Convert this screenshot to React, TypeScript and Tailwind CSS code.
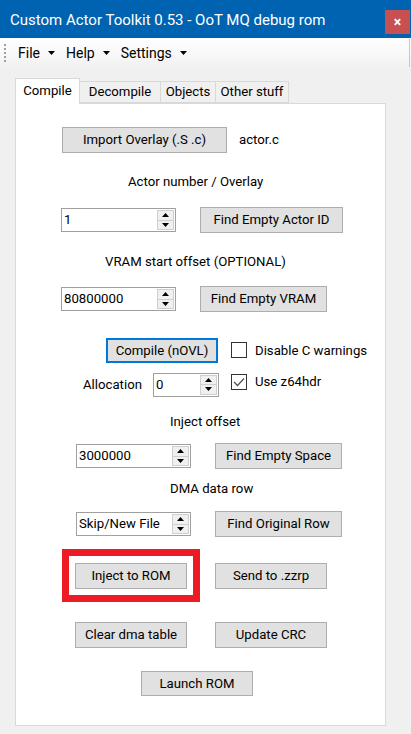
import React from "react";

function Btn({
  label,
  w,
  h = 26,
  focused = false,
}: {
  label: string;
  w: number;
  h?: number;
  focused?: boolean;
}) {
  return (
    <div
      style={{ width: w, height: h }}
      className={
        focused
          ? "flex shrink-0 items-center justify-center border-2 border-[#0078d7] bg-[#e1e1e1] text-black"
          : "flex shrink-0 items-center justify-center border border-[#adadad] bg-[#e1e1e1] text-black"
      }
    >
      {label}
    </div>
  );
}

function Spin({ value, w = 115 }: { value: string; w?: number }) {
  return (
    <div
      style={{ width: w }}
      className="flex h-[24px] shrink-0 items-center border border-[#a0a0a0] bg-white pl-[2px] pr-[1px]"
    >
      <span className="min-w-0 flex-1 overflow-hidden whitespace-nowrap">{value}</span>
      <div className="flex h-[20px] w-[17px] flex-col">
        <div className="flex flex-1 items-center justify-center border border-[#cfcfcf] bg-[#f0f0f0]">
          <svg width="7" height="4" viewBox="0 0 7 4">
            <path d="M3.5 0 L7 4 L0 4 Z" fill="#000" />
          </svg>
        </div>
        <div className="flex flex-1 items-center justify-center border border-t-0 border-[#cfcfcf] bg-[#f0f0f0]">
          <svg width="7" height="4" viewBox="0 0 7 4">
            <path d="M0 0 L7 0 L3.5 4 Z" fill="#000" />
          </svg>
        </div>
      </div>
    </div>
  );
}

function Check({ label, checked }: { label: string; checked?: boolean }) {
  return (
    <div className="flex items-center gap-[8px]">
      <div className="flex h-[16px] w-[16px] items-center justify-center border border-[#333] bg-white">
        {checked && (
          <svg width="12" height="10" viewBox="0 0 12 10">
            <path d="M1 5 L4.5 8.5 L11 1.5" fill="none" stroke="#555" strokeWidth="1.3" />
          </svg>
        )}
      </div>
      <span>{label}</span>
    </div>
  );
}

function MenuItem({ label }: { label: string }) {
  return (
    <div className="flex items-center gap-[8px]">
      <span>{label}</span>
      <svg width="7" height="4" viewBox="0 0 7 4">
        <path d="M0 0 L7 0 L3.5 4 Z" fill="#000" />
      </svg>
    </div>
  );
}

export default function App() {
  return (
    <div className="h-[734px] w-[411px] overflow-hidden bg-[#f0f0f0] font-['Roboto',sans-serif] text-[13.2px] text-black">
      {/* title bar */}
      <div className="flex h-[38px] items-start bg-[#0063b1] text-white">
        <span className="mt-[9px] pl-[10px] text-[15px]">
          Custom Actor Toolkit 0.53 - OoT MQ debug rom
        </span>
        <div className="ml-auto mr-px mt-[10px] flex h-[24px] w-[25px] items-center justify-center bg-[#c75050] text-[14px] font-bold leading-none">
          ×
        </div>
      </div>

      {/* menu strip */}
      <div className="flex h-[30px] items-center bg-gradient-to-b from-[#ffffff] to-[#f1f1f1] pr-px text-[14px]">
        <div className="ml-[4px] flex h-[18px] flex-col justify-between">
          {[0, 1, 2, 3, 4].map((i) => (
            <div key={i} className="h-[2px] w-[2px] bg-[#a0a0a0]" />
          ))}
        </div>
        <div className="ml-[12px] flex items-center gap-[11px]">
          <MenuItem label="File" />
          <MenuItem label="Help" />
          <MenuItem label="Settings" />
        </div>
        <div className="ml-auto h-[28px] w-px bg-[#c8c8c8]" />
      </div>

      {/* tabs */}
      <div className="mt-[10px] pl-[15px]">
        <div className="relative z-10 flex h-[25px] items-end">
          <div className="-mb-px flex h-[26px] w-[65px] items-center justify-center border border-b-0 border-[#d9d9d9] bg-white pb-[2px]">
            Compile
          </div>
          <div className="flex h-[22px] w-[81px] items-center justify-center border border-l-0 border-[#d9d9d9] bg-[#f0f0f0]">
            Decompile
          </div>
          <div className="flex h-[22px] w-[55px] items-center justify-center border border-l-0 border-[#d9d9d9] bg-[#f0f0f0]">
            Objects
          </div>
          <div className="flex h-[22px] w-[73px] items-center justify-center border border-l-0 border-[#d9d9d9] bg-[#f0f0f0]">
            Other stuff
          </div>
        </div>

        {/* panel */}
        <div className="w-[371px] border border-[#d9d9d9] bg-white pb-[29px]">
          <div className="mt-[23px] flex items-center pl-[46px]">
            <Btn label="Import Overlay (.S .c)" w={165} />
            <span className="ml-[12px]">actor.c</span>
          </div>

          <div className="mt-[19px] h-[20px] pl-[112px] leading-[20px]">
            Actor number / Overlay
          </div>

          <div className="mt-[15px] flex h-[26px] items-center pl-[45px]">
            <Spin value="1" />
            <div className="ml-[24px]">
              <Btn label="Find Empty Actor ID" w={143} />
            </div>
          </div>

          <div className="mt-[19px] h-[20px] pl-[89px] leading-[20px]">
            VRAM start offset (OPTIONAL)
          </div>

          <div className="mt-[14px] flex h-[26px] items-center pl-[45px]">
            <Spin value="80800000" />
            <div className="ml-[24px]">
              <Btn label="Find Empty VRAM" w={127} />
            </div>
          </div>

          <div className="mt-[26px] flex h-[25px] items-center pl-[90px]">
            <Btn label="Compile (nOVL)" w={112} h={25} focused />
            <div className="ml-[13px]">
              <Check label="Disable C warnings" />
            </div>
          </div>

          <div className="mt-[9px] flex h-[25px] items-start pl-[67px]">
            <span className="w-[70px] self-center">Allocation</span>
            <div className="self-center">
              <Spin value="0" w={66} />
            </div>
            <div className="ml-[12px]">
              <Check label="Use z64hdr" checked />
            </div>
          </div>

          <div className="mt-[15px] h-[20px] pl-[154px] leading-[20px]">
            Inject offset
          </div>

          <div className="mt-[11px] flex h-[26px] items-center pl-[60px]">
            <Spin value="3000000" />
            <div className="ml-[24px]">
              <Btn label="Find Empty Space" w={127} />
            </div>
          </div>

          <div className="mt-[10px] h-[20px] pl-[154px] leading-[20px]">
            DMA data row
          </div>

          <div className="mt-[12px] flex h-[26px] items-center pl-[60px]">
            <Spin value="Skip/New File" />
            <div className="ml-[24px]">
              <Btn label="Find Original Row" w={127} />
            </div>
          </div>

          <div className="mt-[12px] flex items-center pl-[46px]">
            <div className="border-[7px] border-[#ed1c24] px-[6px] pb-[6px] pt-[7px]">
              <Btn label="Inject to ROM" w={112} />
            </div>
            <div className="ml-[15px]">
              <Btn label="Send to .zzrp" w={112} />
            </div>
          </div>

          <div className="mt-[20px] flex items-center pl-[59px]">
            <Btn label="Clear dma table" w={112} />
            <div className="ml-[28px]">
              <Btn label="Update CRC" w={112} />
            </div>
          </div>

          <div className="mt-[23px] pl-[125px]">
            <Btn label="Launch ROM" w={112} h={25} />
          </div>
        </div>
      </div>
    </div>
  );
}
